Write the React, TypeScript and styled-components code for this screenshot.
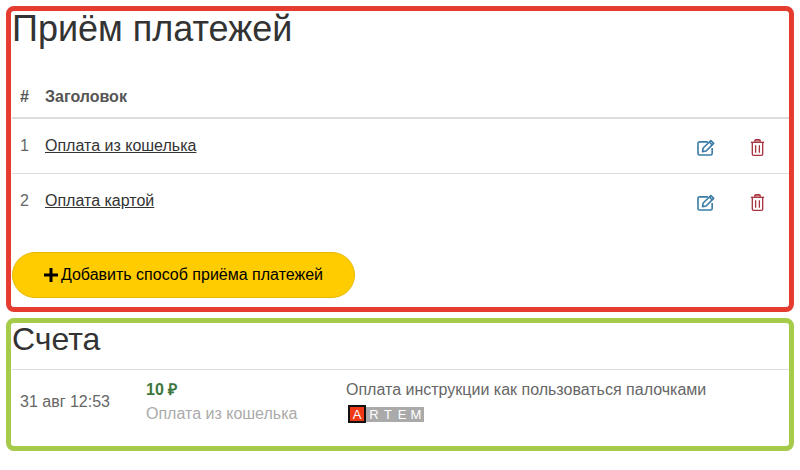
import React from "react";
import styled, { createGlobalStyle } from "styled-components";

const Global = createGlobalStyle`
  html, body { margin: 0; padding: 0; background: #fff; }
  body { font-family: "Liberation Sans", Arial, sans-serif; color: #555; }
`;

const Page = styled.div`
  display: flex;
  flex-direction: column;
  gap: 6px;
  padding: 6px 6px 0;
  width: 800px;
  height: 470px;
  box-sizing: border-box;
`;

const Card = styled.section<{ $color: string; $height: number }>`
  border: 5px solid ${(p) => p.$color};
  border-radius: 8px;
  height: ${(p) => p.$height}px;
  box-sizing: border-box;
  padding: 0 0 0 1px;
  display: flex;
  flex-direction: column;
`;

const Title = styled.h1<{ $size: number; $height: number }>`
  margin: 0;
  font-weight: 400;
  font-size: ${(p) => p.$size}px;
  line-height: ${(p) => p.$height}px;
  height: ${(p) => p.$height}px;
  color: #333;
`;

const HeadRow = styled.div`
  display: flex;
  align-items: center;
  height: 40px;
  margin-top: 29px;
  padding-top: 1px;
  border-bottom: 2px solid #ddd;
  box-sizing: content-box;
  font-size: 16px;
  font-weight: 700;
  color: #555;
`;

const NumCell = styled.div`
  width: 33px;
  padding-left: 8px;
  box-sizing: border-box;
  flex: none;
`;

const Row = styled.div<{ $last?: boolean }>`
  display: flex;
  align-items: center;
  height: 54px;
  border-bottom: ${(p) => (p.$last ? "1px solid transparent" : "1px solid #ddd")};
  font-size: 16px;
  color: #666;
`;

const RowLink = styled.a`
  flex: 1;
  color: #333;
  text-decoration: underline;
`;

const IconCell = styled.div`
  flex: none;
  display: flex;
  width: 53px;
  justify-content: flex-start;
  padding-top: 2px;
`;

const TrailingCell = styled(IconCell)`
  width: 39px;
`;

const AddButton = styled.button`
  margin-top: 23px;
  width: 343px;
  height: 46px;
  border: 1px solid #e6b800;
  border-radius: 23px;
  background: #fc0;
  color: #000;
  font: 400 16px "Liberation Sans", Arial, sans-serif;
  display: flex;
  align-items: center;
  justify-content: center;
  gap: 3px;
  padding: 0;
  align-self: flex-start;
`;

const AccountRow = styled.div`
  display: flex;
  border-top: 1px solid #ddd;
  margin-top: 14px;
  height: 76px;
  font-size: 16px;
`;

const DateCell = styled.div`
  width: 134px;
  padding: 22px 0 0 8px;
  line-height: 20px;
  box-sizing: border-box;
  flex: none;
  color: #666;
`;

const AmountCell = styled.div`
  width: 200px;
  flex: none;
  display: flex;
  flex-direction: column;
  gap: 4px;
  padding-top: 10px;
`;

const Amount = styled.div`
  font-weight: 700;
  color: #3c763d;
  line-height: 20px;
`;

const Method = styled.div`
  color: #aaa;
  line-height: 20px;
`;

const DescCell = styled.div`
  flex: 1;
  display: flex;
  flex-direction: column;
  gap: 5px;
  padding-top: 10px;
`;

const Desc = styled.div`
  color: #666;
  line-height: 20px;
`;

const Logo = styled.div`
  display: flex;
  height: 18px;
  align-items: stretch;
  align-self: flex-start;
  font-size: 13px;
  margin-left: 2px;
`;

const LogoFirst = styled.span`
  width: 14px;
  background: #f03a17;
  border: 2px solid #111;
  color: #fff;
  display: flex;
  align-items: center;
  justify-content: center;
`;

const LogoRest = styled.span`
  display: flex;
  align-items: center;
  background: #aaa;
  margin: 2px 0 1px;
  padding: 0 1px;
  color: #fff;
`;

const LogoLetter = styled.span`
  width: 14px;
  text-align: center;
`;

const EditIcon = () => (
  <svg width="19" height="17" viewBox="0 0 20 18" fill="none" stroke="#3a7ca5" strokeWidth="1.7">
    <path d="M11.5 3H2.6C1.7 3 1 3.7 1 4.6v10.8c0 .9.7 1.6 1.6 1.6h11.8c.9 0 1.6-.7 1.6-1.6V9.5" />
    <path d="M6.5 9.5 14.6 1.6l3 3-8 8.1-3.8.7z" strokeLinejoin="round" />
    <path d="M13 3.2l3 3" />
  </svg>
);

const TrashIcon = () => (
  <svg width="15" height="17" viewBox="0 0 15 18" fill="none" stroke="#a8323f" strokeWidth="1.4">
    <path d="M.5 3.5h14" />
    <path d="M2 3.5v12.3c0 .8.6 1.5 1.4 1.5h8.2c.8 0 1.4-.7 1.4-1.5V3.5" />
    <path d="M4.6 3V1.8C4.6 1 5.1.7 5.8.7h3.4c.7 0 1.2.3 1.2 1.1V3" fill="#c9767f" />
    <path d="M5.5 6.5v8M9.5 6.5v8" />
  </svg>
);

const PlusIcon = () => (
  <svg width="14" height="14" viewBox="0 0 14 14" fill="#000">
    <rect x="0" y="5.5" width="14" height="3" />
    <rect x="5.5" y="0" width="3" height="14" />
  </svg>
);

export default function App() {
  return (
    <>
      <Global />
      <Page>
        <Card $color="#e53c2f" $height={306}>
          <Title $size={36} $height={36}>Приём платежей</Title>
          <HeadRow>
            <NumCell>#</NumCell>
            <div>Заголовок</div>
          </HeadRow>
          {[
            ["1", "Оплата из кошелька"],
            ["2", "Оплата картой"],
          ].map(([n, t], i) => (
            <Row key={n} $last={i === 1}>
              <NumCell>{n}</NumCell>
              <RowLink>{t}</RowLink>
              <IconCell><EditIcon /></IconCell>
              <TrailingCell><TrashIcon /></TrailingCell>
            </Row>
          ))}
          <AddButton><PlusIcon />Добавить способ приёма платежей</AddButton>
        </Card>
        <Card $color="#a6cb4a" $height={133}>
          <Title $size={32} $height={32}>Счета</Title>
          <AccountRow>
            <DateCell>31 авг 12:53</DateCell>
            <AmountCell>
              <Amount>10 ₽</Amount>
              <Method>Оплата из кошелька</Method>
            </AmountCell>
            <DescCell>
              <Desc>Оплата инструкции как пользоваться палочками</Desc>
              <Logo>
                <LogoFirst>A</LogoFirst>
                <LogoRest>
                  {["R", "T", "E", "M"].map((l) => <LogoLetter key={l}>{l}</LogoLetter>)}
                </LogoRest>
              </Logo>
            </DescCell>
          </AccountRow>
        </Card>
      </Page>
    </>
  );
}
